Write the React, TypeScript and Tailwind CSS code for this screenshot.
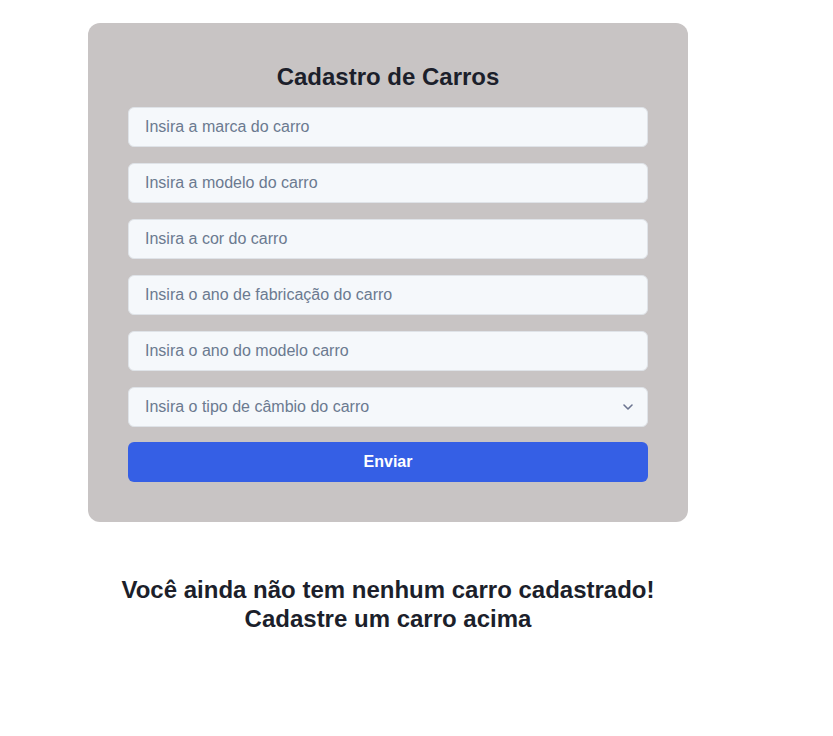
import React from "react"

const fields = [
	"Insira a marca do carro",
	"Insira a modelo do carro",
	"Insira a cor do carro",
	"Insira o ano de fabricação do carro",
	"Insira o ano do modelo carro",
]

const baseClass =
	"h-10 w-full rounded-md border border-[#dfe3e8] bg-[#f5f8fb] px-4 text-base outline-none"

export default function App() {
	return (
		<div className="min-h-[736px] bg-white font-['Liberation_Sans',Arial,sans-serif] pt-[23px]">
			<div className="ml-[88px] w-[600px]">
				{/* formulario */}
				<form
					onSubmit={(e) => e.preventDefault()}
					className="rounded-xl bg-[#c8c4c4] px-10 pt-[38px] pb-10">
					<h1 className="mb-[14px] text-center text-2xl leading-8 font-bold text-[#1c1f2b]">
						Cadastro de Carros
					</h1>
					<div className="flex flex-col gap-4">
						{fields.map((f) => (
							<input
								key={f}
								type="text"
								placeholder={f}
								className={baseClass + " text-[#374151] placeholder:text-[#6b7a90]"}
							/>
						))}
						<div className="relative">
							<select
								defaultValue=""
								className={baseClass + " appearance-none text-[#6b7a90]"}>
								<option value="" disabled>
									Insira o tipo de câmbio do carro
								</option>
								<option value="manual">Manual</option>
								<option value="automatico">Automático</option>
							</select>
							<svg
								className="pointer-events-none absolute right-[14px] top-[16px]"
								width="12"
								height="8"
								viewBox="0 0 12 8"
								fill="none">
								<path
									d="M2 2l4 4 4-4"
									stroke="#6b7490"
									strokeWidth="1.6"
									strokeLinecap="round"
									strokeLinejoin="round"
								/>
							</svg>
						</div>
					</div>
					<button
						type="submit"
						className="mt-[15px] h-10 w-full rounded-md bg-[#355fe5] text-base font-bold text-white">
						Enviar
					</button>
				</form>

				{/* lista vazia */}
				<h2 className="mt-[54px] text-center text-2xl leading-[28.8px] font-bold text-[#1c1f2b]">
					Você ainda não tem nenhum carro cadastrado!
					<br />
					Cadastre um carro acima
				</h2>
			</div>
		</div>
	)
}
